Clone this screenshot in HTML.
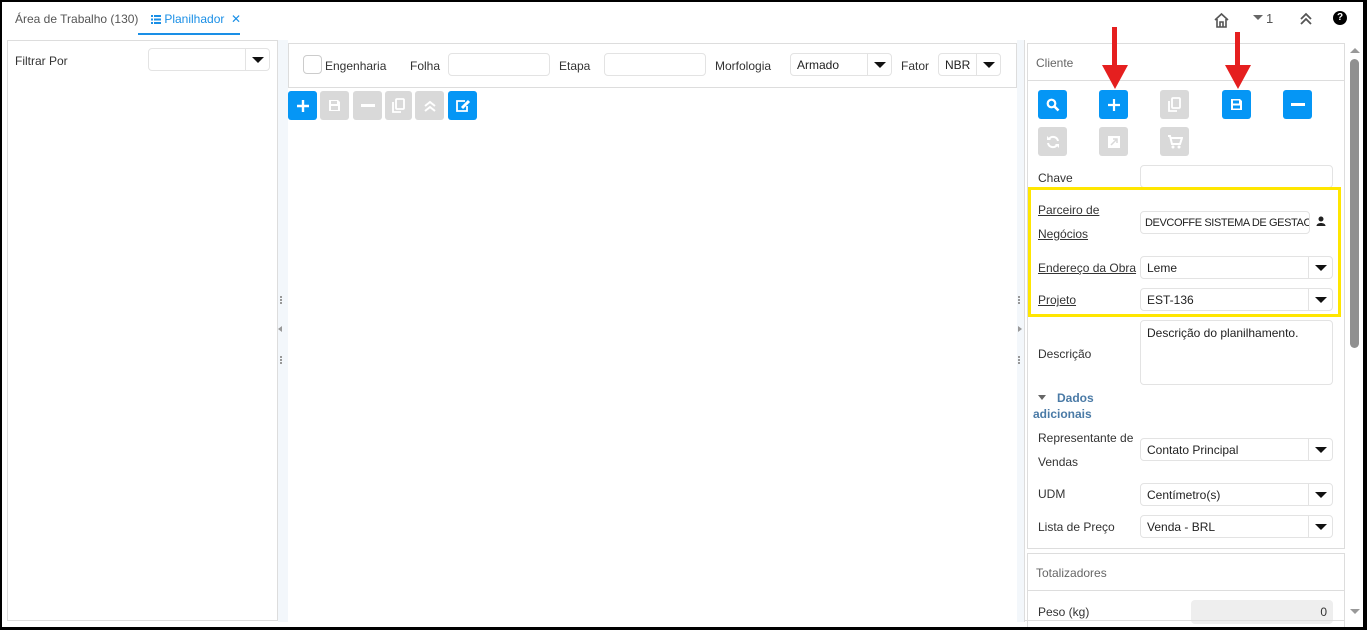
<!DOCTYPE html>
<html><head><meta charset="utf-8">
<style>
*{box-sizing:border-box;margin:0;padding:0}
body{width:1367px;height:630px;overflow:hidden;background:#000;font-family:"Liberation Sans",sans-serif;font-size:12px;color:#333;position:relative}
.a{position:absolute}
#page{position:absolute;left:2px;top:2px;width:1361px;height:625px;background:#fff;overflow:hidden}
.box{position:absolute;border:1px solid #ddd;background:#fff}
.inp{position:absolute;border:1px solid #e3e3e3;border-radius:4px;background:#fff;height:23px;padding-left:6px;line-height:21px;font-size:12px;color:#222;white-space:nowrap;overflow:hidden}
.sel .dd{position:absolute;right:0;top:0;width:24px;height:21px;border-left:1px solid #e3e3e3}
.sel .dd:after{content:"";position:absolute;left:6px;top:8px;border-left:6px solid transparent;border-right:6px solid transparent;border-top:6px solid #111}
.lbl{position:absolute;font-size:12px;color:#333;white-space:nowrap}
.u{text-decoration:underline}
.btn{position:absolute;width:29px;height:29px;border-radius:3px;background:#0596f5;display:flex;align-items:center;justify-content:center}
.btn.g{background:#d9d9d9}
.strip{position:absolute;background:#f3f7fb}
.dots{position:absolute;width:2px;height:8px;background:repeating-linear-gradient(#999 0 2px,transparent 2px 3px)}
</style></head><body>
<div id="page">
<div class="a" style="left:13px;top:10px;font-size:12px;color:#555">Área de Trabalho (130)</div>
<div class="a" style="left:149px;top:10px;font-size:12px;color:#1a8fe6;white-space:nowrap">
<svg width="10" height="9" style="vertical-align:-1px" viewBox="0 0 10 9"><g fill="#1a8fe6"><rect x="0" y="0" width="2" height="2"/><rect x="3" y="0" width="7" height="2"/><rect x="0" y="3.5" width="2" height="2"/><rect x="3" y="3.5" width="7" height="2"/><rect x="0" y="7" width="2" height="2"/><rect x="3" y="7" width="7" height="2"/></g></svg> Planilhador &nbsp;✕</div>
<div class="a" style="left:136px;top:31px;width:102px;height:2px;background:#1a8fe6"></div>
<svg class="a" style="left:1211px;top:10px" width="17" height="16" viewBox="0 0 17 16"><path d="M2 8 L8.5 2 L15 8 M4 7 V15 H13 V7 M7 15 V10 H10 V15" fill="none" stroke="#555" stroke-width="1.6"/></svg>
<div class="a" style="left:1251px;top:13px;border-left:5px solid transparent;border-right:5px solid transparent;border-top:5px solid #666"></div>
<div class="a" style="left:1264px;top:9px;font-size:13px;color:#555">1</div>
<svg class="a" style="left:1298px;top:10px" width="12" height="14" viewBox="0 0 12 14"><path d="M1 7 L6 2 L11 7 M1 12 L6 7 L11 12" fill="none" stroke="#555" stroke-width="1.8"/></svg>
<div class="a" style="left:1331px;top:9px;width:14px;height:14px;border-radius:7px;background:#000;color:#fff;font-size:10px;font-weight:bold;text-align:center;line-height:14px">?</div>

<div class="box" style="left:5px;top:38px;width:271px;height:581px"></div>
<div class="lbl" style="left:13px;top:52px">Filtrar Por</div>
<div class="inp sel" style="left:146px;top:46px;width:122px"><div class="dd"></div></div>
<div class="strip" style="left:276px;top:38px;width:10px;height:582px"></div>
<div class="dots" style="left:278px;top:294px"></div>
<div class="a" style="left:276px;top:324px;border-top:3px solid transparent;border-bottom:3px solid transparent;border-right:4px solid #999"></div>
<div class="dots" style="left:278px;top:354px"></div>

<div class="box" style="left:286px;top:41px;width:729px;height:45px"></div>
<div class="a" style="left:301px;top:53px;width:19px;height:19px;border:1px solid #ccc;border-radius:4px"></div>
<div class="lbl" style="left:323px;top:57px">Engenharia</div>
<div class="lbl" style="left:408px;top:57px">Folha</div>
<div class="inp" style="left:446px;top:51px;width:102px"></div>
<div class="lbl" style="left:557px;top:57px">Etapa</div>
<div class="inp" style="left:602px;top:51px;width:102px"></div>
<div class="lbl" style="left:713px;top:57px">Morfologia</div>
<div class="inp sel" style="left:788px;top:51px;width:102px;line-height:23px">Armado<div class="dd"></div></div>
<div class="lbl" style="left:899px;top:57px">Fator</div>
<div class="inp sel" style="left:936px;top:51px;width:63px;line-height:23px">NBR<div class="dd"></div></div>

<div class="btn" style="left:286px;top:89px"><svg width="14" height="14"><path d="M7 1V13M1 7H13" stroke="#fff" stroke-width="2.4"/></svg></div>
<div class="btn g" style="left:318px;top:89px"><svg width="13" height="13"><path d="M1 1H10L12 3V12H1Z" fill="#fff"/><rect x="3" y="2" width="6" height="3" fill="#d9d9d9"/><rect x="3" y="7" width="7" height="4" fill="#d9d9d9"/></svg></div>
<div class="btn g" style="left:351px;top:89px"><svg width="14" height="4"><rect width="14" height="3" fill="#fff"/></svg></div>
<div class="btn g" style="left:383px;top:89px;width:27px"><svg width="13" height="15"><rect x="4" y="1" width="8" height="10" rx="1" fill="none" stroke="#fff" stroke-width="1.8"/><path d="M1 4V14H9" fill="none" stroke="#fff" stroke-width="1.8"/></svg></div>
<div class="btn g" style="left:413px;top:89px"><svg width="12" height="12"><path d="M1 6L6 2L11 6M1 11L6 7L11 11" fill="none" stroke="#fff" stroke-width="2"/></svg></div>
<div class="btn" style="left:446px;top:89px"><svg width="16" height="14"><path d="M10 2H2V12H12V7" fill="none" stroke="#fff" stroke-width="1.8"/><path d="M7 9L14 2" stroke="#fff" stroke-width="3"/></svg></div>

<div class="strip" style="left:1015px;top:38px;width:7px;height:582px"></div>
<div class="a" style="left:1022px;top:38px;width:1px;height:582px;background:#ddd"></div>
<div class="dots" style="left:1016px;top:294px"></div>
<div class="a" style="left:1016px;top:324px;border-top:3px solid transparent;border-bottom:3px solid transparent;border-left:4px solid #999"></div>
<div class="dots" style="left:1016px;top:354px"></div>

<div class="box" style="left:1025px;top:41px;width:318px;height:506px"></div>
<div class="a" style="left:1025px;top:78px;width:318px;height:1px;background:#ddd"></div>
<div class="lbl" style="left:1034px;top:54px;color:#666">Cliente</div>

<div class="btn" style="left:1036px;top:88px"><svg width="14" height="14"><circle cx="5.5" cy="5.5" r="3.8" fill="none" stroke="#fff" stroke-width="2.2"/><path d="M8.5 8.5L12.5 12.5" stroke="#fff" stroke-width="2.6"/></svg></div>
<div class="btn" style="left:1097px;top:88px"><svg width="14" height="14"><path d="M7 1V13M1 7H13" stroke="#fff" stroke-width="2.2"/></svg></div>
<div class="btn g" style="left:1158px;top:88px"><svg width="13" height="15"><rect x="4" y="1" width="8" height="10" rx="1" fill="none" stroke="#fff" stroke-width="1.8"/><path d="M1 4V14H9" fill="none" stroke="#fff" stroke-width="1.8"/></svg></div>
<div class="btn" style="left:1220px;top:88px"><svg width="13" height="13"><path d="M1 1H10L12 3V12H1Z" fill="#fff"/><rect x="3" y="2.5" width="6" height="3" fill="#0596f5"/><rect x="3" y="7.5" width="7" height="3" fill="#0596f5"/></svg></div>
<div class="btn" style="left:1281px;top:88px"><svg width="14" height="4"><rect width="14" height="3" fill="#fff"/></svg></div>
<div class="btn g" style="left:1036px;top:125px"><svg width="14" height="14"><path d="M12 6A5 5 0 0 0 3 4M2 8A5 5 0 0 0 11 10" fill="none" stroke="#fff" stroke-width="2"/><path d="M1 1V5H5Z M13 13V9H9Z" fill="#fff"/></svg></div>
<div class="btn g" style="left:1097px;top:125px"><svg width="12" height="12"><rect width="12" height="12" fill="#fff"/><path d="M3 9L9 3M5 3H9V7" fill="none" stroke="#d9d9d9" stroke-width="1.5"/></svg></div>
<div class="btn g" style="left:1158px;top:125px"><svg width="16" height="14"><path d="M1 1H3L5 9H13L15 3H4" fill="none" stroke="#fff" stroke-width="2"/><circle cx="6" cy="12" r="1.5" fill="#fff"/><circle cx="12" cy="12" r="1.5" fill="#fff"/></svg></div>

<div class="lbl" style="left:1036px;top:169px">Chave</div>
<div class="inp" style="left:1138px;top:163px;width:193px"></div>

<div class="a" style="left:1026px;top:185px;width:313px;height:130px;border:3px solid #ffe600"></div>
<div class="lbl u" style="left:1036px;top:201px">Parceiro de</div>
<div class="lbl u" style="left:1036px;top:225px">Negócios</div>
<div class="inp" style="left:1138px;top:209px;width:170px;line-height:23px;font-size:11px;padding-left:4px;letter-spacing:-0.4px">DEVCOFFE SISTEMA DE GESTAO</div>
<svg class="a" style="left:1314px;top:214px" width="10" height="10" viewBox="0 0 10 10"><circle cx="5" cy="3" r="2.5" fill="#222"/><path d="M0.5 10C0.5 6 9.5 6 9.5 10Z" fill="#222"/></svg>
<div class="lbl u" style="left:1036px;top:259px">Endereço da Obra</div>
<div class="inp sel" style="left:1138px;top:254px;width:193px;line-height:23px">Leme<div class="dd"></div></div>
<div class="lbl u" style="left:1036px;top:291px">Projeto</div>
<div class="inp sel" style="left:1138px;top:286px;width:193px;line-height:23px">EST-136<div class="dd"></div></div>

<div class="lbl" style="left:1036px;top:345px">Descrição</div>
<div class="inp" style="left:1138px;top:318px;width:193px;height:65px;line-height:16px;padding-top:4px">Descrição do planilhamento.</div>
<div class="a" style="left:1036px;top:393px;border-left:4px solid transparent;border-right:4px solid transparent;border-top:5px solid #666"></div>
<div class="lbl" style="left:1055px;top:389px;color:#4a7aa6;font-weight:bold">Dados</div>
<div class="lbl" style="left:1031px;top:405px;color:#4a7aa6;font-weight:bold">adicionais</div>

<div class="lbl" style="left:1036px;top:429px">Representante de</div>
<div class="lbl" style="left:1036px;top:453px">Vendas</div>
<div class="inp sel" style="left:1138px;top:436px;width:193px;line-height:23px">Contato Principal<div class="dd"></div></div>
<div class="lbl" style="left:1036px;top:485px">UDM</div>
<div class="inp sel" style="left:1138px;top:481px;width:193px;line-height:23px">Centímetro(s)<div class="dd"></div></div>
<div class="lbl" style="left:1036px;top:518px">Lista de Preço</div>
<div class="inp sel" style="left:1138px;top:513px;width:193px;line-height:23px">Venda - BRL<div class="dd"></div></div>

<div class="box" style="left:1025px;top:551px;width:318px;height:80px"></div>
<div class="a" style="left:1025px;top:588px;width:318px;height:1px;background:#ddd"></div>
<div class="lbl" style="left:1034px;top:564px;color:#666">Totalizadores</div>
<div class="lbl" style="left:1036px;top:603px">Peso (kg)</div>
<div class="a" style="left:1189px;top:598px;width:142px;height:24px;background:#eee;border-radius:4px;text-align:right;padding-right:6px;line-height:24px">0</div>

<div class="a" style="left:1022px;top:618px;width:322px;height:1px;background:#ddd"></div>
<div class="a" style="left:1343px;top:38px;width:18px;height:582px;background:#fff"></div>
<div class="a" style="left:1348px;top:46px;border-left:5px solid transparent;border-right:5px solid transparent;border-bottom:5px solid #999"></div>
<div class="a" style="left:1348px;top:57px;width:9px;height:289px;background:#909090;border-radius:5px"></div>
<div class="a" style="left:1348px;top:607px;border-left:5px solid transparent;border-right:5px solid transparent;border-top:5px solid #999"></div>

<div class="a" style="left:1110px;top:25px;width:5px;height:40px;background:#e51f1f"></div>
<div class="a" style="left:1100px;top:63px;border-left:13px solid transparent;border-right:13px solid transparent;border-top:24px solid #e51f1f"></div>
<div class="a" style="left:1233px;top:30px;width:5px;height:35px;background:#e51f1f"></div>
<div class="a" style="left:1223px;top:63px;border-left:13px solid transparent;border-right:13px solid transparent;border-top:24px solid #e51f1f"></div>
</div>
</body></html>
